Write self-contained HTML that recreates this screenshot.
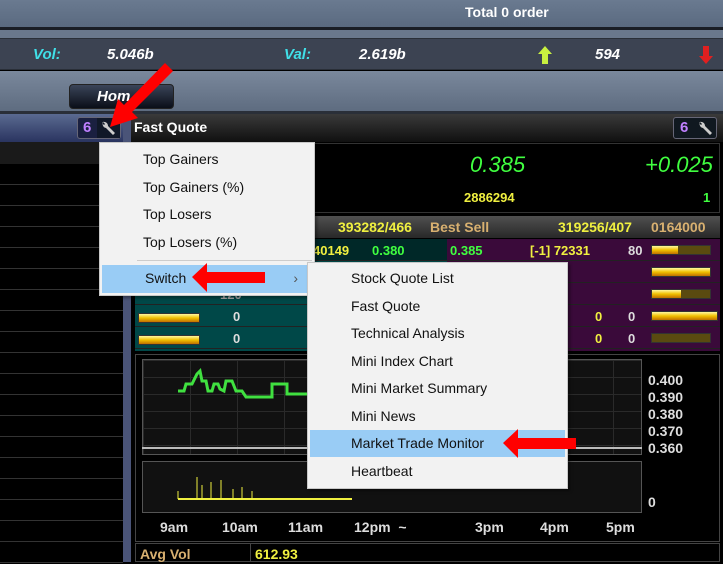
<!DOCTYPE html>
<html><head><meta charset="utf-8"><style>
*{margin:0;padding:0;box-sizing:border-box}
body{width:723px;height:562px;overflow:hidden;background:#000;font-family:"Liberation Sans",sans-serif;position:relative}
.a{position:absolute}
.b{font-weight:bold}
.menu{background:#f2f2f2;border:1px solid #c8c8c8;box-shadow:2px 2px 3px rgba(0,0,0,.4);font-size:14px;color:#111}
.mi{position:absolute;left:0;right:0;height:27px;line-height:27px}
.y{color:#f0f040;font-weight:bold;font-size:13px}
.g{color:#40ff40;font-weight:bold;font-size:13px}
.w{color:#ddd;font-weight:bold;font-size:13px}
.bar{position:absolute;height:10px;background:#5a4a10;border:1px solid #333}
.bar i{display:block;height:100%;background:linear-gradient(#fff8a0,#f0c000 50%,#c07000)}
</style></head><body>
<div class="a" style="left:0;top:0;width:723px;height:27px;background:linear-gradient(#6a7a90,#5a6a80)"></div>
<div class="a b" style="left:465px;top:4px;color:#fff;font-size:14px">Total 0 order</div>
<div class="a" style="left:0;top:27px;width:723px;height:3px;background:#1a1e26"></div>
<div class="a" style="left:0;top:30px;width:723px;height:8px;background:#6a788c"></div>
<div class="a" style="left:0;top:38px;width:723px;height:32px;background:#3c4352;border-top:1px solid #2a2f38;border-bottom:1px solid #2a2f38"></div>
<div class="a b" style="left:33px;top:46px;color:#40e0e8;font-size:15px;font-style:italic">Vol:</div>
<div class="a b" style="left:107px;top:46px;color:#fff;font-size:15px;font-style:italic">5.046b</div>
<div class="a b" style="left:284px;top:46px;color:#40e0e8;font-size:15px;font-style:italic">Val:</div>
<div class="a b" style="left:359px;top:46px;color:#fff;font-size:15px;font-style:italic">2.619b</div>
<svg class="a" style="left:537px;top:45px" width="16" height="20"><path d="M8 1 L15 9 L11 9 L11 19 L5 19 L5 9 L1 9Z" fill="#c8f040"/></svg>
<div class="a b" style="left:595px;top:46px;color:#fff;font-size:15px;font-style:italic">594</div>
<svg class="a" style="left:698px;top:45px" width="16" height="20"><path d="M8 19 L15 11 L11 11 L11 1 L5 1 L5 11 L1 11Z" fill="#e02020"/></svg>
<div class="a" style="left:0;top:71px;width:723px;height:40px;background:linear-gradient(#7a889c,#5e6c80)"></div>
<div class="a" style="left:69px;top:84px;width:105px;height:25px;border-radius:4px;background:linear-gradient(#3a4458,#0a0e18);border:1px solid #222"></div>
<div class="a b" style="left:97px;top:88px;color:#fff;font-size:15px;font-style:italic">Hom</div>
<div class="a" style="left:0;top:111px;width:723px;height:3px;background:#2a2f38"></div>
<div class="a" style="left:0;top:114px;width:123px;height:28px;background:linear-gradient(#5a6a90,#2a3460)"></div>
<div class="a" style="left:0;top:142px;width:123px;height:420px;background:#000"></div>
<div class="a" style="left:0;top:142px;width:123px;height:22px;background:#1a1a1a"></div>
<div class="a" style="left:0;top:164px;width:123px;height:400px;background:repeating-linear-gradient(#000 0 20px,#333 20px 21px)"></div>
<div class="a" style="left:77px;top:117px;width:44px;height:22px;border:1px solid #667;border-radius:3px;background:#1a2040"></div>
<div class="a b" style="left:83px;top:119px;color:#c080ff;font-size:15px">6</div>
<div class="a" style="left:97px;top:118px;width:23px;height:20px;background:#101828"></div>
<svg class="a" style="left:100px;top:119px" width="18" height="18"><path d="M4 2 A4 4 0 0 0 6 9 L13 16 L15 14 L8 7 A4 4 0 0 0 3 3 L5 5 L4 6 L2 4Z" fill="#ccc"/></svg>
<div class="a" style="left:123px;top:114px;width:8px;height:448px;background:#4a5478"></div>
<div class="a" style="left:131px;top:114px;width:592px;height:28px;background:linear-gradient(#3a3a3a,#101010)"></div>
<div class="a b" style="left:134px;top:119px;color:#fff;font-size:14px">Fast Quote</div>
<div class="a" style="left:673px;top:117px;width:44px;height:22px;border:1px solid #667;border-radius:3px;background:#101820"></div>
<div class="a b" style="left:680px;top:119px;color:#c080ff;font-size:15px">6</div>
<svg class="a" style="left:697px;top:119px" width="18" height="18"><path d="M4 2 A4 4 0 0 0 6 9 L13 16 L15 14 L8 7 A4 4 0 0 0 3 3 L5 5 L4 6 L2 4Z" fill="#ccc"/></svg>
<div class="a" style="left:135px;top:143px;width:585px;height:70px;background:#000;border:1px solid #333"></div>
<div class="a" style="left:470px;top:152px;color:#40ff40;font-size:22px;font-style:italic">0.385</div>
<div class="a" style="left:645px;top:152px;color:#40ff40;font-size:22px;font-style:italic">+0.025</div>
<div class="a y" style="left:464px;top:190px">2886294</div>
<div class="a g" style="left:703px;top:190px">1</div>
<div class="a" style="left:135px;top:216px;width:585px;height:22px;background:linear-gradient(#505050,#282828)"></div>
<div class="a y" style="left:338px;top:219px;font-size:14px">393282/466</div>
<div class="a b" style="left:430px;top:219px;color:#d8b070;font-size:14px">Best Sell</div>
<div class="a y" style="left:558px;top:219px;font-size:14px">319256/407</div>
<div class="a b" style="left:651px;top:219px;color:#d8b070;font-size:14px">0164000</div>
<div class="a" style="left:135px;top:239px;width:312px;height:112px;background:#004848"></div>
<div class="a" style="left:135px;top:239px;width:312px;height:22px;background:#002828"></div>
<div class="a" style="left:447px;top:239px;width:273px;height:112px;background:repeating-linear-gradient(#3a0a3a 0 21px,#222 21px 22px)"></div>
<div class="a" style="left:135px;top:239px;width:312px;height:112px;background:repeating-linear-gradient(transparent 0 21px,#222 21px 22px)"></div>
<div class="a y" style="left:313px;top:243px">40149</div>
<div class="a g" style="left:372px;top:243px">0.380</div>
<div class="a g" style="left:450px;top:243px">0.385</div>
<div class="a y" style="left:530px;top:243px">[-1] 72331</div>
<div class="a w" style="left:628px;top:243px">80</div>
<div class="a w" style="left:220px;top:287px;color:#aaa">120</div>
<div class="a w" style="left:233px;top:309px">0</div><div class="a w" style="left:233px;top:331px">0</div>
<div class="a y" style="left:595px;top:309px">0</div><div class="a y" style="left:595px;top:331px">0</div>
<div class="a w" style="left:628px;top:309px">0</div><div class="a w" style="left:628px;top:331px">0</div>
<div class="bar" style="left:138px;top:313px;width:62px"><i style="width:100%"></i></div>
<div class="bar" style="left:138px;top:335px;width:62px"><i style="width:100%"></i></div>
<div class="bar" style="left:651px;top:245px;width:60px"><i style="width:45%"></i></div>
<div class="bar" style="left:651px;top:267px;width:60px"><i style="width:100%"></i></div>
<div class="bar" style="left:651px;top:289px;width:60px"><i style="width:50%"></i></div>
<div class="bar" style="left:651px;top:311px;width:67px"><i style="width:100%"></i></div>
<div class="bar" style="left:651px;top:333px;width:60px"><i style="width:0"></i></div>
<div class="a" style="left:135px;top:354px;width:585px;height:188px;background:#000;border:1px solid #444"></div>
<div class="a" style="left:142px;top:359px;width:500px;height:96px;border:1px solid #555;background:#111;background-image:linear-gradient(90deg,#2a2a2a 1px,transparent 1px),linear-gradient(#2a2a2a 1px,transparent 1px);background-size:47px 17px"></div>
<div class="a" style="left:142px;top:447px;width:500px;height:2px;background:#bbb"></div>
<div class="a" style="left:142px;top:461px;width:500px;height:52px;border:1px solid #555;background:#111"></div>
<svg class="a" style="left:142px;top:359px" width="500" height="160"><polyline fill="none" stroke="#40e040" stroke-width="3" points="36,32 42,32 44,25 50,25 55,15 58,12 60,22 64,22 66,32 70,32 72,25 76,25 78,30 82,32 84,22 90,22 94,32 100,32 104,38 108,38 130,38 130,25 145,25 145,35 180,35"/><polyline fill="none" stroke="#f0f040" stroke-width="2" points="36,140 210,140"/><path d="M36,140V132M55,140V118M60,140V126M69,140V123M79,140V121M91,140V130M100,140V128M110,140V132" stroke="#f0f040"/></svg>
<div class="a w" style="left:648px;top:372px;font-size:14px;line-height:17px">0.400<br>0.390<br>0.380<br>0.370<br>0.360</div>
<div class="a w" style="left:648px;top:494px;font-size:14px">0</div>
<div class="a w" style="left:160px;top:519px;font-size:14px">9am</div>
<div class="a w" style="left:222px;top:519px;font-size:14px">10am</div>
<div class="a w" style="left:288px;top:519px;font-size:14px">11am</div>
<div class="a w" style="left:354px;top:519px;font-size:14px">12pm &nbsp;~</div>
<div class="a w" style="left:475px;top:519px;font-size:14px">3pm</div>
<div class="a w" style="left:540px;top:519px;font-size:14px">4pm</div>
<div class="a w" style="left:606px;top:519px;font-size:14px">5pm</div>
<div class="a" style="left:135px;top:543px;width:585px;height:19px;background:#000;border:1px solid #444"></div>
<div class="a" style="left:250px;top:543px;width:1px;height:19px;background:#444"></div>
<div class="a b" style="left:140px;top:546px;color:#d8b070;font-size:14px">Avg Vol</div>
<div class="a y" style="left:255px;top:546px;font-size:14px">612.93</div>
<div class="a menu" style="left:99px;top:142px;width:216px;height:154px">
 <div class="mi" style="top:3px;padding-left:43px">Top Gainers</div>
 <div class="mi" style="top:31px;padding-left:43px">Top Gainers (%)</div>
 <div class="mi" style="top:58px;padding-left:43px">Top Losers</div>
 <div class="mi" style="top:86px;padding-left:43px">Top Losers (%)</div>
 <div class="a" style="left:37px;right:2px;top:117px;height:1px;background:#ccc"></div>
 <div class="mi" style="top:122px;background:#99ccf5;padding-left:43px;left:2px;right:2px;height:28px">Switch<span style="position:absolute;right:14px;color:#555">›</span></div>
</div>
<div class="a menu" style="left:307px;top:262px;width:261px;height:227px">
 <div class="mi" style="top:2px;padding-left:43px">Stock Quote List</div>
 <div class="mi" style="top:30px;padding-left:43px">Fast Quote</div>
 <div class="mi" style="top:57px;padding-left:43px">Technical Analysis</div>
 <div class="mi" style="top:85px;padding-left:43px">Mini Index Chart</div>
 <div class="mi" style="top:112px;padding-left:43px">Mini Market Summary</div>
 <div class="mi" style="top:140px;padding-left:43px">Mini News</div>
 <div class="mi" style="top:167px;background:#99ccf5;padding-left:41px;left:2px;right:2px">Market Trade Monitor</div>
 <div class="mi" style="top:195px;padding-left:43px">Heartbeat</div>
</div>
<svg class="a" style="left:0;top:0" width="723" height="562">
<path d="M165 63 L173 71 L132 112 L138 118 L110 127 L118 99 L124 105 Z" fill="#f00"/>
<path d="M192 277 L207 263 L207 272 L265 272 L265 283 L207 283 L207 292 Z" fill="#f00"/>
<path d="M503 443 L518 429 L518 438 L576 438 L576 449 L518 449 L518 458 Z" fill="#f00"/>
</svg>
</body></html>
